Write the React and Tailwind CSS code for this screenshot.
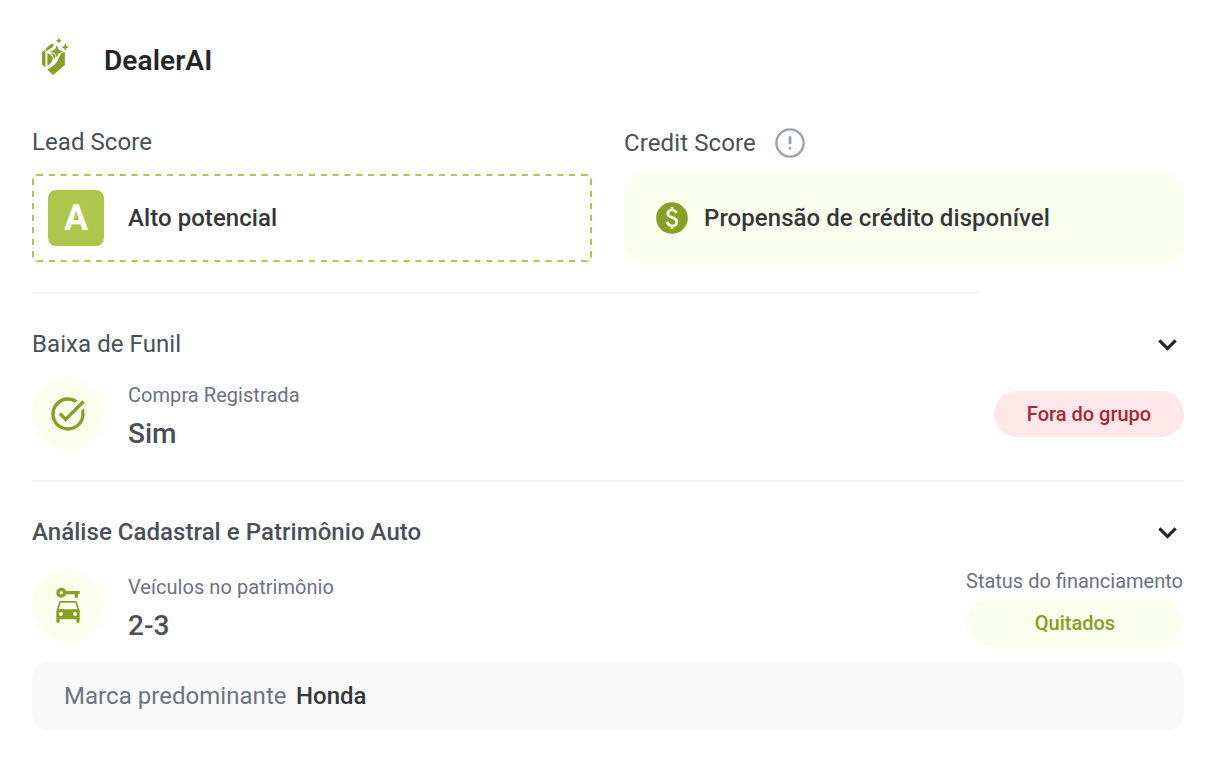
import React from 'react';
import { MdCarRental, MdKeyboardArrowDown, MdPaid, MdTaskAlt } from 'react-icons/md';

const Logo = () => (
  <svg width="40" height="46" viewBox="0 0 40 46" fill="#86a023" className="ml-1 shrink-0">
    <path d="M6 18.2 9.4 15.4V33.6L6 30.6Z" />
    <path d="M10 14.6 15 10 17.6 10 17 13 14 14.8 10 17.6Z" />
    <path d="M11.4 19.2 Q16.2 20.6 16.8 24.6 Q16 29.4 11.4 31.8Z" />
    <path d="M13.4 16.6 15.6 18.6 18.6 20 19.6 22.4 18.4 25.6 Q17.2 20 13.4 16.6Z" />
    <path d="M11.4 35.4 Q20 31.6 22.8 24 L24.8 20 28.8 17.6V31L17 41Z" />
    <path d="M20.8 11.2 22.6 15.6 27 17.4 22.6 19.2 20.8 23.6 19 19.2 14.6 17.4 19 15.6Z" />
    <path d="M29.3 9.2 30.5 11.9 33.2 13.1 30.5 14.3 29.3 17 28.1 14.3 25.4 13.1 28.1 11.9Z" />
    <path d="M22.8 3.8 23.8 5.7 25.7 6.7 23.8 7.7 22.8 9.6 21.8 7.7 19.9 6.7 21.8 5.7Z" />
  </svg>
);

const InfoIcon = () => (
  <svg width="30" height="30" viewBox="0 0 30 30" fill="none" stroke="#9ca3af" strokeLinecap="round">
    <circle cx="15" cy="15" r="13.6" strokeWidth="2.4" />
    <path d="M15 9.3v5.6" strokeWidth="2.8" />
    <path d="M15 20.1v.2" strokeWidth="2.8" />
  </svg>
);

// long dashes along each side, the corners stay open
const DashedOutline = () => (
  <svg width="560" height="88" viewBox="0 0 560 88" fill="none" stroke="#adc64b" strokeWidth="2" className="absolute inset-0">
    <path d="M5 1H555M5 87H555" strokeDasharray="6 5.826" />
    <path d="M1 5V83M559 5V83" strokeDasharray="6 6" />
    <path d="M5 1Q3.8 1 3 1.8M555 1Q556.2 1 557 1.8M5 87Q3.8 87 3 86.2M555 87Q556.2 87 557 86.2" opacity="0.5" />
    <path d="M1 5Q1 4.2 1.6 3.6M559 5Q559 4.2 558.4 3.6M1 83Q1 83.8 1.6 84.4M559 83Q559 83.8 558.4 84.4" opacity="0.5" />
  </svg>
);

const SectionHeader = ({ title, className }) => (
  <div className="flex h-9 items-center justify-between">
    <h2 className={className}>{title}</h2>
    <MdKeyboardArrowDown className="mr-[-2px] size-[37px] text-[#242628]" />
  </div>
);

const InfoItem = ({ icon, label, value }) => (
  <div className="flex items-center gap-6">
    <div className="flex size-[72px] items-center justify-center rounded-full bg-[#fbffed] text-[#86a023]">
      {icon}
    </div>
    <div className="pt-[7px]">
      <p className="text-[20px] leading-7 tracking-[0.05px] text-[#6b7280]">{label}</p>
      <p className="mt-[5px] text-[28px] leading-10 font-medium text-[#495057]">{value}</p>
    </div>
  </div>
);

const App = () => {
  return (
    <div className="h-[780px] w-[1216px] bg-white px-8 pt-[34px] font-['Roboto',sans-serif]">
      <header className="flex h-[46px] items-center">
        <Logo />
        <h1 className="ml-7 pt-2 text-[28px] leading-9 font-semibold tracking-[0.1px] text-[#242628]">DealerAI</h1>
      </header>

      <div className="mt-[46px] grid grid-cols-2 gap-8">
        <div>
          <p className="h-12 text-2xl leading-8 tracking-[0.07px] text-[#495057]">Lead Score</p>
          <div className="relative flex h-[88px] items-center gap-6 px-4">
            <DashedOutline />
            <div className="flex size-14 items-center justify-center rounded-lg bg-[#adc64b] text-4xl font-bold text-white">A</div>
            <span className="text-2xl font-medium tracking-[0.06px] text-[#343639]">Alto potencial</span>
          </div>
        </div>
        <div>
          <div className="flex h-12 items-start gap-[19px] pt-px">
            <p className="text-2xl leading-8 tracking-[0.1px] text-[#495057]">Credit Score</p>
            <span className="pt-px">
              <InfoIcon />
            </span>
          </div>
          <div className="flex h-[88px] items-center gap-[13px] rounded-2xl bg-[#fbffed] px-[29px]">
            <MdPaid className="size-[38px] text-[#86a023]" />
            <span className="text-2xl font-medium tracking-[0.06px] text-[#343639]">Propensão de crédito disponível</span>
          </div>
        </div>
      </div>

      <div className="mt-[30px] h-[2px] w-[948px] bg-[#f5f5f5]" />

      <section className="pt-8">
        <SectionHeader title="Baixa de Funil" className="text-2xl tracking-[0.07px] text-[#495057]" />
        <div className="mt-4 flex h-[72px] items-center justify-between">
          <InfoItem icon={<MdTaskAlt className="size-10" />} label="Compra Registrada" value="Sim" />
          <span className="flex h-[46px] w-[190px] items-center justify-center rounded-full bg-[#fde7e9] text-[20px] font-medium text-[#a92734]">
            Fora do grupo
          </span>
        </div>
      </section>

      <div className="mt-[30px] h-[2px] bg-[#f5f5f5]" />

      <section className="pt-8">
        <SectionHeader title="Análise Cadastral e Patrimônio Auto" className="text-2xl font-medium tracking-[0.05px] text-[#495057]" />
        <div className="mt-5 flex h-[72px] items-center justify-between">
          <InfoItem icon={<MdCarRental className="size-10" />} label="Veículos no patrimônio" value="2-3" />
          <div className="w-[218px]">
            <p className="text-[20px] leading-7 whitespace-nowrap text-[#6b7280]">Status do financiamento</p>
            <span className="mt-[5px] flex h-[46px] items-center justify-center rounded-full bg-[#fbffed] text-[20px] font-medium text-[#86a023]">
              Quitados
            </span>
          </div>
        </div>
      </section>

      <div className="mt-5 flex h-[68px] items-center gap-[9.5px] rounded-2xl bg-[#f9f9f9] px-8 text-2xl">
        <span className="tracking-[0.04px] text-[#6c757d]">Marca predominante</span>
        <span className="font-medium text-[#343639]">Honda</span>
      </div>
    </div>
  );
};

export default App;
